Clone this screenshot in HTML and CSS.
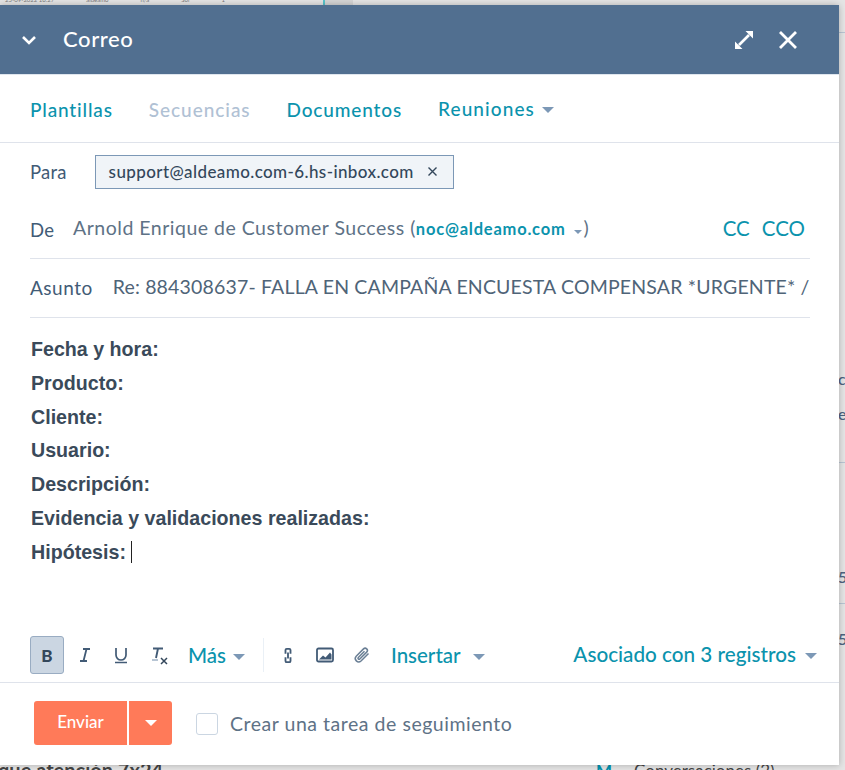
FILE: index.html
```html
<!DOCTYPE html>
<html lang="es">
<head>
<meta charset="utf-8">
<title>Correo</title>
<link rel="stylesheet" href="styles.css">
</head>
<body>
<div class="backdrop">
  <div class="bg-top"><span>25-09-2022 16:27</span><span>aldeamo</span><span>n/a</span><span>Sol</span><span>1</span></div>
  <div class="bg-accent"></div>
  <div class="bg-line bg-l1"></div>
  <div class="bg-line bg-l2"></div>
  <div class="bg-line bg-l3"></div>
  <span class="bg-letter bg-c">c</span>
  <span class="bg-letter bg-e">e</span>
  <span class="bg-letter bg-5a">5.</span>
  <span class="bg-letter bg-5b">5.</span>
  <div class="bg-bottom-left">que atención 7x24</div>
  <div class="bg-bottom-right"><span class="bg-m">M</span>Conversaciones (2)</div>
</div>
<main class="composer">
  <header class="head">
    <svg class="chev" width="16" height="10" viewBox="0 0 16 10"><path d="M2 2l6 6 6-6" fill="none" stroke="#fff" stroke-width="2.6"/></svg>
    <span class="head-title">Correo</span>
    <span class="head-spacer"></span>
    <svg class="expand" width="20" height="20" viewBox="0 0 20 20"><path d="M5 15L15 5" stroke="#fff" stroke-width="2.6"/><path d="M11.500 1h7.500v7.500zM1 11.500V19h7.500z" fill="#fff"/></svg>
    <svg class="close" width="20" height="20" viewBox="0 0 20 20"><path d="M2 2l16 16M18 2L2 18" stroke="#fff" stroke-width="2.8"/></svg>
  </header>
  <nav class="tabs">
    <a class="tab">Plantillas</a>
    <a class="tab tab-off">Secuencias</a>
    <a class="tab">Documentos</a>
    <a class="tab tab-menu">Reuniones<i class="caret"></i></a>
  </nav>
  <section class="fields">
    <div class="row row-to">
      <span class="label">Para</span>
      <span class="chip">support@aldeamo.com-6.hs-inbox.com<svg class="chip-x" width="11" height="11" viewBox="0 0 11 11"><path d="M1.500 1.500l8 8M9.500 1.500l-8 8" stroke="#33475b" stroke-width="1.400"/></svg></span>
    </div>
    <div class="row row-from">
      <span class="label">De</span>
      <span class="from">Arnold Enrique de Customer Success (<b class="addr">noc@aldeamo.com</b><i class="caret caret-sm"></i>)</span>
      <span class="cc">CC</span>
      <span class="cc">CCO</span>
    </div>
    <div class="row row-subject">
      <span class="label">Asunto</span>
      <span class="subject">Re: 884308637- FALLA EN CAMPAÑA ENCUESTA COMPENSAR *URGENTE* /</span>
    </div>
  </section>
  <section class="body-text">
    <p>Fecha y hora:</p>
    <p>Producto:</p>
    <p>Cliente:</p>
    <p>Usuario:</p>
    <p>Descripción:</p>
    <p>Evidencia y validaciones realizadas:</p>
    <p>Hipótesis: <span class="cursor"></span></p>
  </section>
  <div class="toolbar">
    <span class="tool-on">B</span>
    <svg class="tool-svg t-i" width="14" height="16" viewBox="0 0 14 16"><path d="M5 2h7M2 14h7M8.500 2L5.500 14" stroke="#425b76" stroke-width="1.800" fill="none"/></svg>
    <svg class="tool-svg t-u" width="16" height="18" viewBox="0 0 16 18"><path d="M3 2v7a5 5 0 0 0 10 0V2" stroke="#425b76" stroke-width="1.700" fill="none"/><path d="M2 16.500h12" stroke="#425b76" stroke-width="1.500"/></svg>
    <svg class="tool-svg t-x" width="18" height="19" viewBox="0 0 18 19"><path d="M2 2.500h10M7 2.500L5 12" stroke="#425b76" stroke-width="1.900" fill="none"/><path d="M1 14h6" stroke="#99acc2" stroke-width="1.400"/><path d="M10 12l6 6M16 12l-6 6" stroke="#33475b" stroke-width="1.500"/></svg>
    <a class="tb-link tb-mas">Más<i class="caret"></i></a>
    <span class="tb-sep"></span>
    <svg class="tool-svg t-link" width="10" height="17" viewBox="0 0 12 20"><path d="M3 8V3.500A1.500 1.500 0 0 1 4.500 2h3A1.500 1.500 0 0 1 9 3.500V8M3 12v4.500A1.500 1.500 0 0 0 4.500 18h3A1.500 1.500 0 0 0 9 16.500V12M6 6.500v7" stroke="#425b76" stroke-width="2.200" fill="none"/></svg>
    <svg class="tool-svg t-img" width="18" height="16" viewBox="0 0 18 16"><rect x="1" y="1.500" width="16" height="13" rx="1.500" fill="none" stroke="#425b76" stroke-width="1.800"/><path d="M3 12.500l4-4 2.500 2L14 5.500l1.500 2v5z" fill="#425b76"/></svg>
    <svg class="tool-svg t-clip" width="18" height="19" viewBox="0 0 18 19"><path d="M15.500 7.500L8 15a3.400 3.400 0 0 1-4.800-4.800l7.300-7.300a2.200 2.200 0 0 1 3.200 3.200L6.800 13a1 1 0 0 1-1.500-1.500L11.500 5.300" fill="none" stroke="#6a7f95" stroke-width="1.500"/></svg>
    <a class="tb-link tb-ins">Insertar<i class="caret"></i></a>
    <span class="head-spacer"></span>
    <a class="tb-link tb-assoc">Asociado con 3 registros<i class="caret"></i></a>
  </div>
  <footer class="foot">
    <div class="send">
      <span class="send-main">Enviar</span>
      <span class="send-more"><i class="caret caret-white"></i></span>
    </div>
    <span class="check"></span>
    <span class="check-label">Crear una tarea de seguimiento</span>
  </footer>
</main>
</body>
</html>
```

FILE: styles.css
```css
* { box-sizing: border-box; }
html, body { margin: 0; height: 770px; overflow: hidden; }
body {
  position: relative;
  width: 845px;
  background: #e4e4e4;
  font-family: "Lato", "Liberation Sans", sans-serif;
  color: #33475b;
  padding-top: 5px;
}

/* page behind the modal */
.backdrop { position: absolute; inset: 0; overflow: hidden; }
.bg-top { position: absolute; left: 5px; top: -4px; display: flex; gap: 32px; font-size: 6px; color: #777; }
.bg-accent { position: absolute; left: 323px; top: 0; width: 30px; height: 5px; background: #d5d5d5; border-left: 2px solid #58c4cb; }
.bg-line { position: absolute; left: 839px; width: 6px; height: 1px; background: #b8c4d2; }
.bg-l1 { top: 32px; }
.bg-l2 { top: 462px; }
.bg-l3 { top: 603px; }
.bg-letter { position: absolute; left: 838px; font-size: 16px; font-weight: 500; color: #4c6280; }
.bg-c { top: 369px; }
.bg-e { top: 404px; }
.bg-5a { top: 567px; }
.bg-5b { top: 629px; }
.bg-bottom-left { position: absolute; left: -2px; top: 758px; font-size: 20px; font-weight: 700; color: #444; }
.bg-bottom-right { position: absolute; left: 596px; top: 760px; font-size: 17px; color: #444; }
.bg-m { color: #0091ae; margin-right: 22px; font-weight: 700; }

/* modal */
.composer {
  position: relative;
  display: flex;
  flex-direction: column;
  width: 839px;
  height: 760px;
  background: #fff;
  border-top-right-radius: 4px;
  box-shadow: 0 0 6px rgba(0, 0, 0, .25);
}
.head {
  display: flex;
  align-items: center;
  flex: none;
  height: 70px;
  padding: 0 41px 0 21px;
  background: #516f90;
  border-bottom: 1px solid #dfe6ee;
}
.head-title { margin-left: 26px; padding-bottom: 3px; font-size: 22px; font-weight: 500; letter-spacing: .6px; color: #fff; }
.head-spacer { flex: 1; }
.close { margin-left: 24px; }

.tabs {
  display: flex;
  align-items: center;
  flex: none;
  gap: 36px;
  height: 68px;
  padding: 1px 0 0 30px;
  border-bottom: 1px solid #dfe3eb;
}
.tab { font-size: 19px; font-weight: 500; letter-spacing: .85px; color: #0b93ad; }
.tab-off { color: #b0c1d4; letter-spacing: .95px; }
.tab-menu { margin-top: -2px; letter-spacing: 1.100px; }
.caret {
  display: inline-block;
  width: 0;
  height: 0;
  margin-left: 7px;
  vertical-align: 3px;
  border-left: 6px solid transparent;
  border-right: 6px solid transparent;
  border-top: 6px solid #7c98b6;
}
.caret-sm { margin-left: 8px; margin-right: 2px; border-width: 4px 4px 0; vertical-align: 1px; }
.caret-white { margin: 0; vertical-align: middle; border-top-color: #fff; }

.fields { flex: none; padding: 0 29px 0 30px; }
.row { display: flex; align-items: center; }
.label { font-size: 18.500px; letter-spacing: .2px; color: #425b76; }
.row-to { height: 57px; }
.chip {
  display: flex;
  align-items: center;
  width: 359px;
  height: 34px;
  margin-left: 28px;
  padding-left: 13px;
  background: #f0f4f8;
  border: 1.500px solid #7c98b6;
  font-size: 17px;
  font-weight: 500;
  letter-spacing: .4px;
  color: #33475b;
  white-space: nowrap;
}
.chip-x { margin-left: 13px; }
.row-from { height: 59px; border-bottom: 1px solid #dfe3eb; padding: 0 5px 2px 0; }
.row-from .label { margin-top: 4px; }
.from { flex: 1; margin: 0 0 2px 19px; font-size: 19.500px; letter-spacing: .5px; color: #5e7286; white-space: nowrap; }
.addr { font-size: 16.500px; font-weight: 700; letter-spacing: .78px; color: #0b93ad; }
.cc { margin-left: 12px; font-size: 20.500px; color: #0b93ad; }
.row-subject { height: 59px; padding-bottom: 3px; border-bottom: 1px solid #dfe3eb; }
.row-subject .label { font-size: 19px; letter-spacing: .5px; margin-top: 2px; }
.subject { margin-left: 20px; font-size: 19.500px; letter-spacing: .17px; color: #4f6478; white-space: nowrap; }

.body-text {
  flex: 1;
  padding: 15px 30px 0 31px;
  font-family: "Liberation Sans", Arial, sans-serif;
  font-size: 19.650px;
  font-weight: 700;
  color: #3a4a5a;
}
.body-text p { margin: 0; height: 33.800px; line-height: 33.800px; }
.cursor { display: inline-block; width: 1px; height: 22px; background: #222; vertical-align: -4px; }

.toolbar {
  display: flex;
  align-items: center;
  flex: none;
  height: 51px;
  padding: 0 22px 4px 30px;
  border-bottom: 1px solid #dfe3eb;
}
.tool-on {
  display: flex;
  align-items: center;
  justify-content: center;
  width: 34px;
  height: 38px;
  background: #cbd6e2;
  border: 1px solid #99acc2;
  border-radius: 3px;
  font-size: 17px;
  font-weight: 900;
  color: #33475b;
}
.tool-svg { flex: none; }
.t-i { margin-left: 14px; }
.t-u { margin-left: 21px; }
.t-x { margin-left: 22px; }
.tb-link { font-size: 20.500px; font-weight: 500; color: #0b93ad; white-space: nowrap; }
.tb-mas { margin-left: 19px; }
.tb-sep { width: 1px; height: 34px; margin-left: 18px; background: #eaf0f6; }
.t-link { margin-left: 19px; }
.t-img { margin-left: 23px; }
.t-clip { margin-left: 19px; }
.tb-ins { margin-left: 20px; }
.tb-ins .caret { margin-left: 12px; }
.tb-assoc { margin-top: -2px; font-size: 20.700px; }
.tb-assoc .caret { margin-left: 9px; }

.foot { display: flex; align-items: center; flex: none; height: 82px; padding: 0 0 3px 34px; }
.send { display: flex; height: 44px; border-radius: 3px; overflow: hidden; background: #ff7a59; }
.send-main {
  display: flex;
  align-items: center;
  justify-content: center;
  width: 95px;
  padding-bottom: 3px;
  border-right: 2px solid #fff;
  font-size: 17px;
  font-weight: 500;
  color: #fff;
}
.send-more { display: flex; align-items: center; justify-content: center; width: 43px; }
.check {
  width: 22px;
  height: 22px;
  margin: 2px 0 0 24px;
  background: #fff;
  border: 1.500px solid #cbd6e2;
  border-radius: 3px;
}
.check-label { margin: 2px 0 0 12px; font-size: 19.500px; letter-spacing: .53px; color: #5e7286; white-space: nowrap; }
```
